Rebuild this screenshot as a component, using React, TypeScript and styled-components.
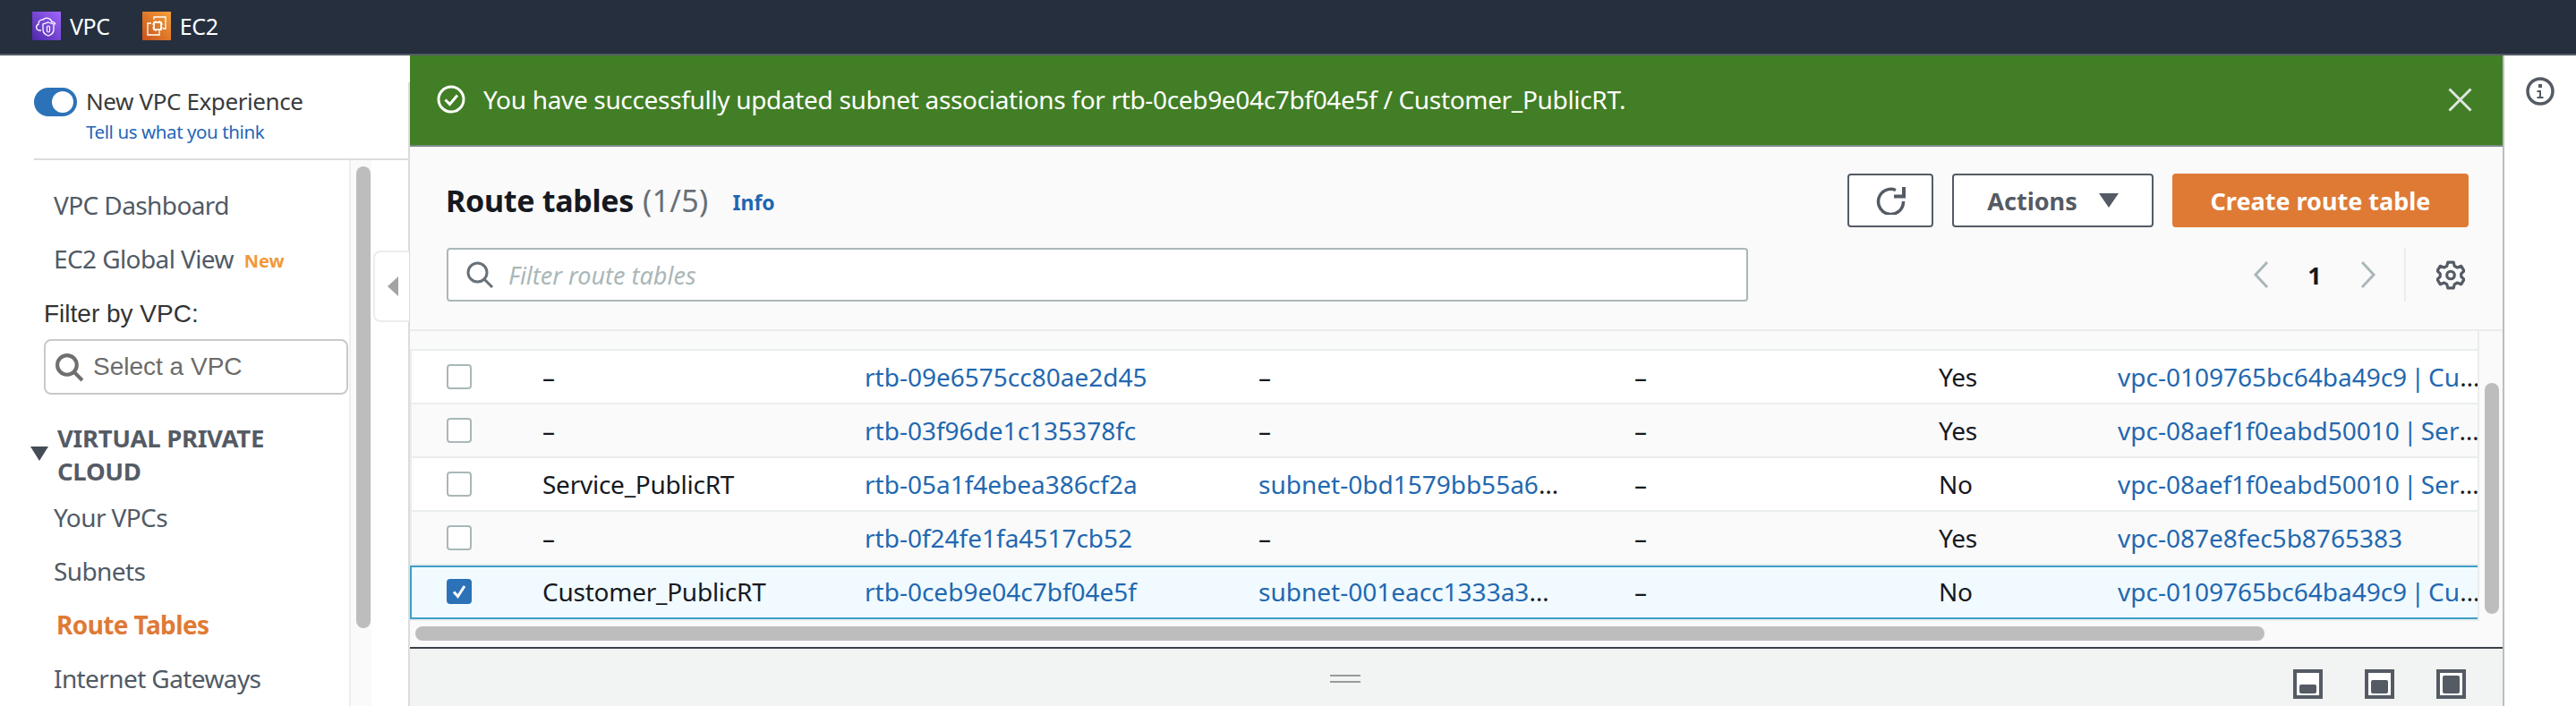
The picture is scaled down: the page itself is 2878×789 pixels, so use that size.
import styled, { createGlobalStyle } from "styled-components";

const GlobalStyle = createGlobalStyle`
  html, body {
    margin: 0;
    padding: 0;
    background: #fff;
  }
  body {
    font-family: "Noto Sans", "Open Sans", sans-serif;
    width: 2878px;
    height: 789px;
    overflow: hidden;
  }
  * { box-sizing: border-box; }
`;

const Shell = styled.div`
  display: flex;
  flex-direction: column;
  width: 2878px;
  height: 789px;
  overflow: hidden;
`;

const TopBar = styled.header`
  display: flex;
  align-items: center;
  height: 62px;
  flex: none;
  padding: 0 0 2px 36px;
  background: #252f3e;
  border-bottom: 2px solid #545b64;
`;

const Service = styled.a`
  display: flex;
  align-items: center;
  gap: 10px;
  margin-right: 36px;
  color: #fff;
  font-size: 25px;
  letter-spacing: -0.4px;
`;

const ServiceIcon = styled.svg`
  width: 32px;
  height: 32px;
  display: block;
`;

const Body = styled.div`
  display: flex;
  flex: 1;
  min-height: 0;
`;

const Sidebar = styled.aside`
  position: relative;
  display: flex;
  flex-direction: column;
  width: 458px;
  flex: none;
  overflow: hidden;
`;

const ExperienceBox = styled.div`
  position: relative;
  display: flex;
  gap: 10px;
  height: 117px;
  flex: none;
  margin-left: 38px;
  padding-top: 34px;
  border-bottom: 2px solid #dcdcdc;

  &::after {
    content: "";
    position: absolute;
    right: 0;
    top: 30px;
    bottom: 0;
    width: 2px;
    background: #dcdcdc;
  }
`;

const Toggle = styled.span`
  position: relative;
  display: block;
  flex: none;
  width: 48px;
  height: 32px;
  margin-top: 2px;
  border-radius: 16px;
  background: #2b72b8;

  &::after {
    content: "";
    position: absolute;
    top: 4px;
    right: 4px;
    width: 24px;
    height: 24px;
    border-radius: 50%;
    background: #fff;
  }
`;

const ExperienceText = styled.div`
  display: flex;
  flex-direction: column;
`;

const ExperienceTitle = styled.span`
  color: #3a3a3a;
  font-size: 26px;
  line-height: 34px;
  letter-spacing: -0.4px;
`;

const FeedbackLink = styled.a`
  color: #1f66b8;
  font-size: 20.5px;
  line-height: 34px;
  letter-spacing: -0.4px;
`;

const SideBody = styled.div`
  display: flex;
  flex: 1;
  min-height: 0;
`;

const SideNav = styled.nav`
  width: 392px;
  flex: none;
  padding-top: 20px;
  border-right: 2px solid #eeeeee;
`;

const NavItem = styled.a<{ $active?: boolean; $x?: number }>`
  display: flex;
  align-items: center;
  gap: 12px;
  height: 60px;
  padding-left: ${(p) => p.$x ?? 60}px;
  color: ${(p) => (p.$active ? "#df7a35" : "#515a65")};
  font-size: 28px;
  font-weight: ${(p) => (p.$active ? 700 : 400)};
  letter-spacing: -0.6px;
`;

const NewTag = styled.span`
  color: #f0993a;
  font-size: 20px;
  font-weight: 700;
  letter-spacing: 0;
  margin-top: 4px;
`;

const FilterLabel = styled.div`
  height: 28px;
  margin: 17px 0 0 49px;
  color: #333;
  font-family: "Liberation Sans", Arial, sans-serif;
  font-size: 28px;
  line-height: 30px;
`;

const VpcSelect = styled.div`
  display: flex;
  align-items: center;
  gap: 10px;
  width: 340px;
  height: 62px;
  margin: 15px 0 0 49px;
  padding-left: 10px;
  border: 2px solid #c9c9c9;
  border-radius: 8px;
  color: #6b6b6b;
  font-family: "Liberation Sans", Arial, sans-serif;
  font-size: 28px;
`;

const SectionTitle = styled.div`
  position: relative;
  margin: 30px 0 3px 64px;
  color: #545b64;
  font-size: 27.5px;
  font-weight: 700;
  line-height: 37px;
  letter-spacing: -0.3px;

  &::before {
    content: "";
    position: absolute;
    left: -30px;
    top: 28px;
    border-left: 10px solid transparent;
    border-right: 10px solid transparent;
    border-top: 16px solid #454c55;
  }
`;

const SideTrack = styled.div`
  width: 23px;
  flex: none;
  padding: 7px 0 0 6px;
  background: #fafafa;
`;

const SideThumb = styled.div`
  width: 16px;
  height: 516px;
  border-radius: 8px;
  background: #bdbdbd;
`;

const SideRule = styled.div`
  width: 2px;
  margin-left: 41px;
  flex: none;
  background: #dcdcdc;
`;

const CollapseHandle = styled.button`
  position: absolute;
  left: 417px;
  top: 218px;
  display: flex;
  align-items: center;
  width: 40px;
  height: 80px;
  padding: 0 0 0 14px;
  background: #fff;
  border: 2px solid #eaeded;
  border-right: none;
  border-radius: 8px 0 0 8px;

  &::before {
    content: "";
    border-top: 11px solid transparent;
    border-bottom: 11px solid transparent;
    border-right: 12px solid #a3a3a3;
  }
`;

const Main = styled.main`
  display: flex;
  flex-direction: column;
  width: 2340px;
  flex: none;
  border-right: 2px solid #b9c0c4;
`;

const Banner = styled.div`
  display: flex;
  align-items: center;
  height: 102px;
  flex: none;
  padding: 0 34px 2px 30px;
  background: #417e25;
  border-bottom: 2px solid #7d8a86;
  color: #fff;
  font-size: 28px;
`;

const BannerText = styled.span`
  flex: 1;
  margin-left: 20px;
  letter-spacing: -0.33px;
`;

const Header = styled.section`
  display: flex;
  flex-direction: column;
  gap: 23px;
  height: 206px;
  flex: none;
  padding: 30px 38px 0 41px;
  background: #fafafa;
  border-bottom: 2px solid #eaeded;
`;

const HeaderRow = styled.div`
  display: flex;
  align-items: center;
`;

const Title = styled.h2`
  margin: 0 0 0 -1px;
  color: #16191f;
  font-size: 34px;
  font-weight: 700;
  line-height: 60px;
  letter-spacing: -0.3px;
`;

const Count = styled.span`
  margin-left: 10px;
  color: #687078;
  font-weight: 400;
  letter-spacing: 0.3px;
`;

const InfoLink = styled.a`
  margin: 3px auto 0 27px;
  color: #1f66b0;
  font-size: 23px;
  font-weight: 700;
`;

const Button = styled.button<{ $primary?: boolean; $w: number }>`
  display: flex;
  align-items: center;
  justify-content: center;
  gap: 24px;
  width: ${(p) => p.$w}px;
  height: 60px;
  margin-left: 21px;
  padding: 0;
  border: ${(p) => (p.$primary ? "none" : "2px solid #545b64")};
  border-radius: 4px;
  background: ${(p) => (p.$primary ? "#df7a35" : "#fff")};
  color: ${(p) => (p.$primary ? "#fff" : "#545b64")};
  font-family: inherit;
  font-size: 27px;
  font-weight: 700;
`;

const Caret = styled.span`
  border-left: 11px solid transparent;
  border-right: 11px solid transparent;
  border-top: 16px solid #545b64;
`;

const FilterInput = styled.div`
  display: flex;
  align-items: center;
  gap: 16px;
  width: 1454px;
  height: 60px;
  padding-left: 19px;
  background: #fff;
  border: 2px solid #aab7b8;
  border-radius: 4px;
  color: #aab7b8;
  font-size: 27px;
  font-style: italic;
`;

const Pager = styled.div`
  display: flex;
  align-items: center;
  margin: 0 4px 0 auto;
`;

const PagerArrow = styled.svg`
  width: 18px;
  height: 32px;
  display: block;
`;

const PageNumber = styled.span`
  width: 102px;
  color: #16191f;
  font-size: 27px;
  font-weight: 700;
  text-align: center;
`;

const PagerRule = styled.span`
  width: 2px;
  height: 60px;
  margin-left: 31px;
  background: #eaeded;
`;

const GearIcon = styled.svg`
  width: 32px;
  height: 33px;
  margin-left: 34px;
  display: block;
`;

const TableArea = styled.div`
  display: flex;
  flex: 1;
  min-height: 0;
  background: #fafafa;
`;

const TableColumn = styled.div`
  display: flex;
  flex-direction: column;
  width: 2312px;
  flex: none;
`;

const Rows = styled.div`
  padding-top: 20px;
  overflow: hidden;
  border-right: 2px solid #eaeded;
`;

const Row = styled.div<{ $selected?: boolean; $odd?: boolean }>`
  display: grid;
  grid-template-columns: 146px 360px 440px 420px 340px 200px 412px;
  align-items: center;
  height: 60px;
  margin: ${(p) => (p.$selected ? "2px 0 2px" : "0")};
  padding-bottom: ${(p) => (p.$selected ? 3 : 0)}px;
  border-top: 2px solid ${(p) => (p.$selected ? "#3f9fc8" : "#eaeded")};
  border-bottom: ${(p) => (p.$selected ? "2px solid #3f9fc8" : "none")};
  border-left: 2px solid ${(p) => (p.$selected ? "#3f9fc8" : "#eaeded")};
  box-shadow: ${(p) => (p.$selected ? "0 -2px 0 #eaeded, 0 2px 0 #eaeded" : "none")};
  background: ${(p) => (p.$selected ? "#f1faff" : p.$odd ? "#fff" : "#fafafa")};
  font-size: 28px;
`;

const CheckCell = styled.div`
  padding-left: 39px;
`;

const Checkbox = styled.span<{ $checked?: boolean }>`
  display: flex;
  align-items: center;
  justify-content: center;
  width: 28px;
  height: 28px;
  background: ${(p) => (p.$checked ? "#2b72b8" : "#fff")};
  border: 2px solid ${(p) => (p.$checked ? "#2b72b8" : "#aab7b8")};
  border-radius: 4px;
`;

const TextCell = styled.div`
  color: #16191f;
  white-space: nowrap;
  letter-spacing: -0.25px;
`;

const LinkCell = styled.div<{ $w?: number }>`
  width: ${(p) => (p.$w ? `${p.$w}px` : "auto")};
  color: #16191f;
  white-space: nowrap;
  word-spacing: -3px;
  overflow: hidden;
  text-overflow: ellipsis;
`;

const RowLink = styled.a`
  color: #2268b0;
`;

const HScroll = styled.div`
  flex: none;
  width: 2066px;
  height: 16px;
  margin: 6px 0 0 6px;
  border-radius: 8px;
  background: #bdbdbd;
`;

const VTrack = styled.div`
  flex: none;
  padding: 58px 0 0 6px;
`;

const VThumb = styled.div`
  width: 16px;
  height: 258px;
  border-radius: 8px;
  background: #bdbdbd;
`;

const SplitPanel = styled.div`
  position: relative;
  display: flex;
  justify-content: flex-end;
  gap: 47px;
  height: 66px;
  flex: none;
  padding: 23px 41px 0 0;
  background: #f2f3f3;
  border-top: 2px solid #3a4149;
`;

const DragHandle = styled.span`
  position: absolute;
  left: 1028px;
  top: 29px;
  width: 34px;
  height: 9px;
  border-top: 2px solid #999;
  border-bottom: 2px solid #999;
`;

const SplitIcon = styled.svg`
  width: 33px;
  height: 33px;
  display: block;
`;

const Rail = styled.aside`
  display: flex;
  justify-content: center;
  flex: 1;
  padding: 24px 0 0 0;
`;

const RailIcon = styled.svg`
  width: 32px;
  height: 32px;
  display: block;
`;

const rows = [
  { name: "", id: "rtb-09e6575cc80ae2d45", subnet: "", main: "Yes", vpc: "vpc-0109765bc64ba49c9 | Customer_VPC" },
  { name: "", id: "rtb-03f96de1c135378fc", subnet: "", main: "Yes", vpc: "vpc-08aef1f0eabd50010 | Service_VPC" },
  { name: "Service_PublicRT", id: "rtb-05a1f4ebea386cf2a", subnet: "subnet-0bd1579bb55a6d3c2", main: "No", vpc: "vpc-08aef1f0eabd50010 | Service_VPC" },
  { name: "", id: "rtb-0f24fe1fa4517cb52", subnet: "", main: "Yes", vpc: "vpc-087e8fec5b8765383" },
  { name: "Customer_PublicRT", id: "rtb-0ceb9e04c7bf04e5f", subnet: "subnet-001eacc1333a3d9c1", main: "No", vpc: "vpc-0109765bc64ba49c9 | Customer_VPC", selected: true },
];

const Magnifier = ({ size, color, stroke }: { size: number; color: string; stroke: number }) => (
  <svg width={size} height={size} viewBox="0 0 32 32" fill="none" style={{ flex: "none" }}>
    <circle cx="13.5" cy="13.5" r="10.5" stroke={color} strokeWidth={stroke} />
    <path d="M21 21l9 9" stroke={color} strokeWidth={stroke} />
  </svg>
);

export default function App() {
  return (
    <Shell>
      <GlobalStyle />
      <TopBar>
        <Service>
          <ServiceIcon viewBox="0 0 32 32">
            <defs>
              <linearGradient id="vpcBg" x1="0" y1="1" x2="1" y2="0">
                <stop offset="0" stopColor="#4d27a8" />
                <stop offset="1" stopColor="#a166ff" />
              </linearGradient>
            </defs>
            <rect width="32" height="32" fill="url(#vpcBg)" />
            <path d="M10 21H8a3.5 3.5 0 0 1-1-6.8A4.5 4.5 0 0 1 12 9a6 6 0 0 1 10 2.5 3.5 3.5 0 0 1 4 3" fill="none" stroke="#fff" strokeWidth="1.3" />
            <path d="M18 12l6 2v6c0 4-3 6-6 7-3-1-6-3-6-7v-6z" fill="none" stroke="#fff" strokeWidth="1.3" />
            <rect x="16.5" y="16" width="3" height="7" rx="1.5" fill="none" stroke="#fff" strokeWidth="1.2" />
          </ServiceIcon>
          VPC
        </Service>
        <Service>
          <ServiceIcon viewBox="0 0 32 32">
            <defs>
              <linearGradient id="ec2Bg" x1="0" y1="1" x2="1" y2="0">
                <stop offset="0" stopColor="#c8511b" />
                <stop offset="1" stopColor="#f5a13a" />
              </linearGradient>
            </defs>
            <rect width="32" height="32" fill="url(#ec2Bg)" />
            <path d="M10 13H6v13h13v-4M13 9V6h13v13h-3" fill="none" stroke="#fff" strokeWidth="1.3" />
            <rect x="13" y="12" width="8" height="8" fill="none" stroke="#fff" strokeWidth="1.8" />
            <path d="M15 10v2M19 10v2M15 20v2M19 20v2M11 14h2M11 18h2M21 14h2M21 18h2" stroke="#fff" strokeWidth="1.2" />
          </ServiceIcon>
          EC2
        </Service>
      </TopBar>

      <Body>
        <Sidebar>
          <ExperienceBox>
            <Toggle />
            <ExperienceText>
              <ExperienceTitle>New VPC Experience</ExperienceTitle>
              <FeedbackLink>Tell us what you think</FeedbackLink>
            </ExperienceText>
          </ExperienceBox>
          <SideBody>
            <SideNav>
              <NavItem>VPC Dashboard</NavItem>
              <NavItem>
                EC2 Global View <NewTag>New</NewTag>
              </NavItem>
              <FilterLabel>Filter by VPC:</FilterLabel>
              <VpcSelect>
                <Magnifier size={33} color="#6f6f6f" stroke={4} />
                Select a VPC
              </VpcSelect>
              <SectionTitle>
                VIRTUAL PRIVATE
                <br />
                CLOUD
              </SectionTitle>
              <NavItem>Your VPCs</NavItem>
              <NavItem>Subnets</NavItem>
              <NavItem $active $x={63}>Route Tables</NavItem>
              <NavItem>Internet Gateways</NavItem>
            </SideNav>
            <SideTrack>
              <SideThumb />
            </SideTrack>
            <SideRule />
          </SideBody>
          <CollapseHandle />
        </Sidebar>

        <Main>
          <Banner>
            <svg width="32" height="32" viewBox="0 0 32 32" fill="none">
              <circle cx="16" cy="16" r="14" stroke="#fff" strokeWidth="3" />
              <path d="M9.5 16.5l5 5 8.5-10" stroke="#fff" strokeWidth="3" />
            </svg>
            <BannerText>
              You have successfully updated subnet associations for rtb-0ceb9e04c7bf04e5f / Customer_PublicRT.
            </BannerText>
            <svg width="27" height="27" viewBox="0 0 27 27" fill="none">
              <path d="M1.5 1.5l24 24M25.5 1.5l-24 24" stroke="#dfe6df" strokeWidth="3" />
            </svg>
          </Banner>

          <Header>
            <HeaderRow>
              <Title>
                Route tables<Count>(1/5)</Count>
              </Title>
              <InfoLink>Info</InfoLink>
              <Button $w={96}>
                <svg width="33" height="32" viewBox="0 0 33 32" fill="none">
                  <path d="M22 4.5A14 14 0 1 0 30.5 17" stroke="#545b64" strokeWidth="3.5" />
                  <path d="M20 11.5h11V1" stroke="#545b64" strokeWidth="4" />
                </svg>
              </Button>
              <Button $w={225}>
                Actions
                <Caret />
              </Button>
              <Button $primary $w={331}>Create route table</Button>
            </HeaderRow>
            <HeaderRow>
              <FilterInput>
                <Magnifier size={32} color="#687078" stroke={3} />
                Filter route tables
              </FilterInput>
              <Pager>
                <PagerArrow viewBox="0 0 18 32" fill="none">
                  <path d="M16 2L3 16l13 14" stroke="#aab7b8" strokeWidth="3" />
                </PagerArrow>
                <PageNumber>1</PageNumber>
                <PagerArrow viewBox="0 0 18 32" fill="none">
                  <path d="M2 2l13 14L2 30" stroke="#aab7b8" strokeWidth="3" />
                </PagerArrow>
                <PagerRule />
                <GearIcon viewBox="1 1 30 30" fill="none">
                  <path
                    d="M13 2.5h6l1 4 3 1.5 4-1.5 3 5-3 3v3l3 3-3 5-4-1.5-3 1.5-1 4h-6l-1-4-3-1.5-4 1.5-3-5 3-3v-3l-3-3 3-5 4 1.5 3-1.5z"
                    stroke="#545b64"
                    strokeWidth="3"
                    strokeLinejoin="round"
                  />
                  <circle cx="16" cy="16" r="4" stroke="#545b64" strokeWidth="3" />
                </GearIcon>
              </Pager>
            </HeaderRow>
          </Header>

          <TableArea>
            <TableColumn>
              <Rows>
                {rows.map((row, i) => (
                  <Row key={row.id} $selected={row.selected} $odd={i % 2 === 0}>
                    <CheckCell>
                      <Checkbox $checked={row.selected}>
                        {row.selected && (
                          <svg width="18" height="18" viewBox="0 0 18 18" fill="none">
                            <path d="M3 9.5l4.5 5L15 3" stroke="#fff" strokeWidth="3" />
                          </svg>
                        )}
                      </Checkbox>
                    </CheckCell>
                    <TextCell>{row.name || "–"}</TextCell>
                    <LinkCell>
                      <RowLink>{row.id}</RowLink>
                    </LinkCell>
                    {row.subnet ? (
                      <LinkCell $w={341}>
                        <RowLink>{row.subnet}</RowLink>
                      </LinkCell>
                    ) : (
                      <TextCell>–</TextCell>
                    )}
                    <TextCell>–</TextCell>
                    <TextCell>{row.main}</TextCell>
                    <LinkCell>
                      <RowLink>{row.vpc}</RowLink>
                    </LinkCell>
                  </Row>
                ))}
              </Rows>
              <HScroll />
            </TableColumn>
            <VTrack>
              <VThumb />
            </VTrack>
          </TableArea>

          <SplitPanel>
            <DragHandle />
            <SplitIcon viewBox="0 0 33 33">
              <rect x="2" y="2" width="29" height="29" fill="#fff" stroke="#545b64" strokeWidth="4" />
              <rect x="7" y="17" width="19" height="10" rx="2" fill="#545b64" />
            </SplitIcon>
            <SplitIcon viewBox="0 0 33 33">
              <rect x="2" y="2" width="29" height="29" fill="#fff" stroke="#545b64" strokeWidth="4" />
              <rect x="7" y="12" width="19" height="15" rx="2" fill="#545b64" />
            </SplitIcon>
            <SplitIcon viewBox="0 0 33 33">
              <rect x="2" y="2" width="29" height="29" fill="#fff" stroke="#545b64" strokeWidth="4" />
              <rect x="7" y="7" width="19" height="20" rx="2" fill="#545b64" />
            </SplitIcon>
          </SplitPanel>
        </Main>

        <Rail>
          <RailIcon viewBox="0 0 32 32" fill="none">
            <circle cx="16" cy="16" r="14" stroke="#545b64" strokeWidth="3.5" />
            <rect x="14" y="8" width="4" height="4" fill="#545b64" />
            <path d="M12.5 15H17v7h2.5v2h-7v-2H15v-5h-2.5z" fill="#545b64" />
          </RailIcon>
        </Rail>
      </Body>
    </Shell>
  );
}
